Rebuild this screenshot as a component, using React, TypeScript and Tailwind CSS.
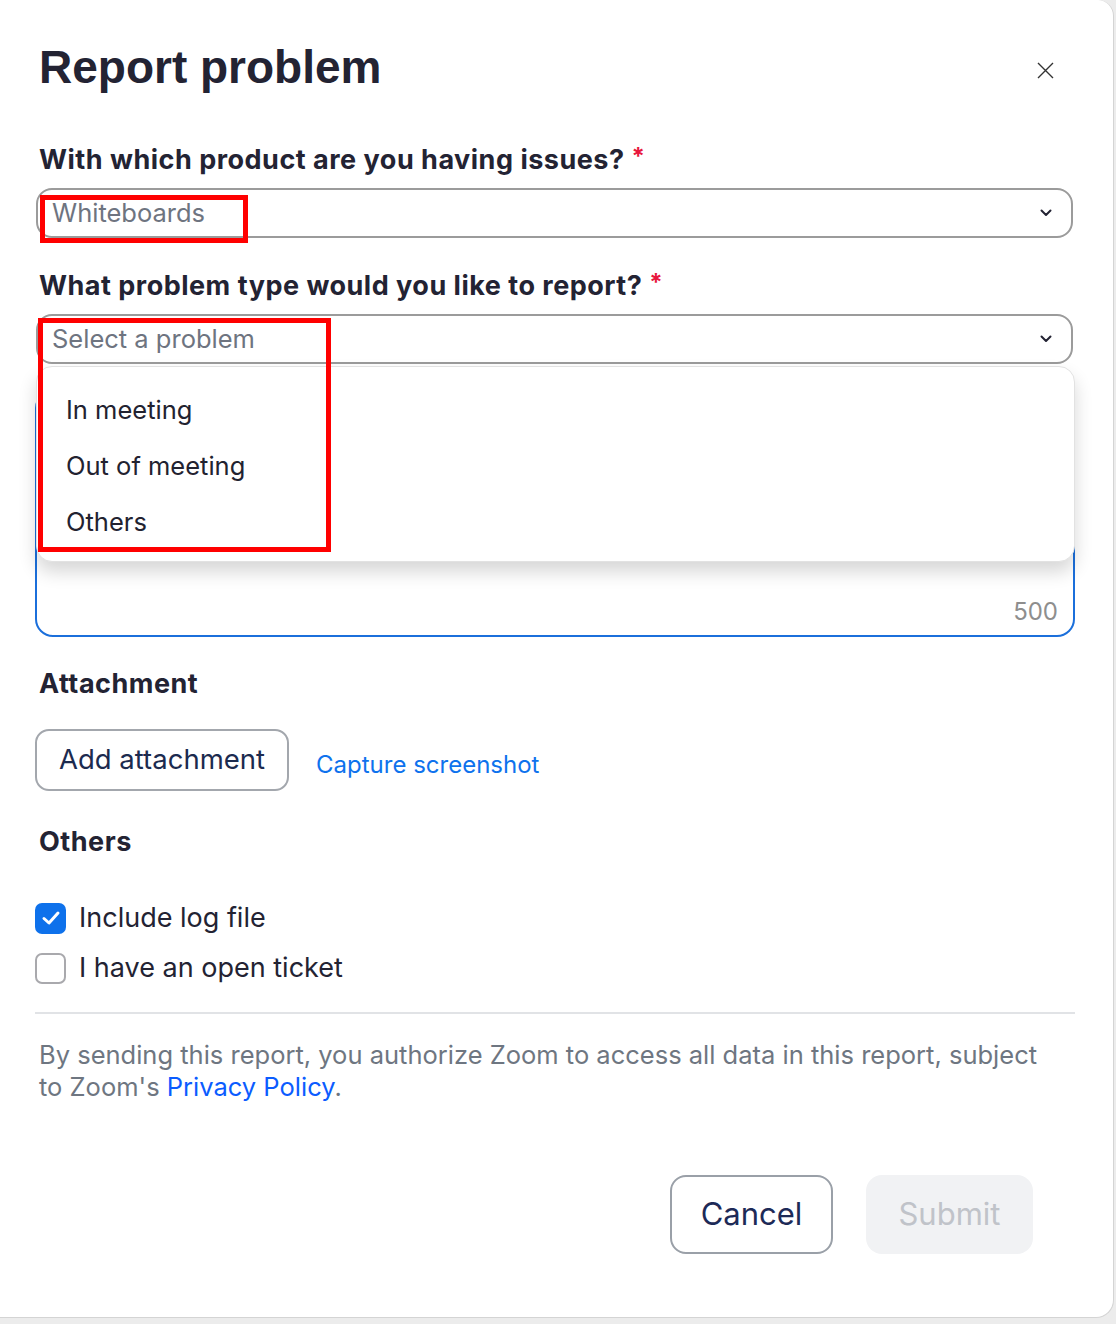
import React from 'react';

const INTER = { fontFamily: 'Inter, "Noto Sans", sans-serif' };
const HELV = { fontFamily: '"Liberation Sans", Arial, sans-serif' };

function Chevron() {
  return (
    <svg width="12" height="8" viewBox="0 0 12 8" fill="none">
      <path d="M1.5 1.5L6 6L10.5 1.5" stroke="#232333" strokeWidth="2" strokeLinecap="round" strokeLinejoin="round" />
    </svg>
  );
}

function Label({ children }: { children: React.ReactNode }) {
  return (
    <div className="ml-[3px] h-[32px] flex items-center text-[27px] font-bold text-[#232333] tracking-[0.5px]" style={INTER}>
      {children}
      <span className="ml-[7px] -mt-[6px] text-[24px] font-bold text-[#e8173d]">*</span>
    </div>
  );
}

function Select({ value }: { value: string }) {
  return (
    <div className="h-[50px] flex items-center justify-between rounded-[16px] border-2 border-[#9b9b9b] bg-white pl-[14px] pr-[19px]">
      <span className="text-[25.5px] text-[#6e7480]" style={INTER}>{value}</span>
      <Chevron />
    </div>
  );
}

export default function App() {
  const items = ['In meeting', 'Out of meeting', 'Others'];

  return (
    <div className="min-h-[1324px] bg-[#ececec]">
      <div className="relative w-[1114px] h-[1318px] bg-white rounded-r-[16px] rounded-br-[18px] border-r border-b border-[#d4d4d4] pl-[36px] pr-[40px]">
        {/* header */}
        <div className="flex items-center justify-between pt-[39px] pr-[19px]">
          <h1 className="ml-[3px] text-[46px] leading-[56px] font-bold text-[#232333]" style={HELV}>
            Report problem
          </h1>
          <svg width="17" height="17" viewBox="0 0 17 17" className="mt-[6px]">
            <path d="M1 1L16 16M16 1L1 16" stroke="#333" strokeWidth="1.4" />
          </svg>
        </div>

        <div className="mt-[49px]">
          <Label>With which product are you having issues?</Label>
          <div className="mt-[12px]">
            <Select value="Whiteboards" />
          </div>
        </div>

        <div className="mt-[32px] relative">
          <Label>What problem type would you like to report?</Label>
          <div className="mt-[12px]">
            <Select value="Select a problem" />
          </div>

          {/* dropdown menu */}
          <div className="absolute left-0 right-[-2px] top-[96px] z-20 h-[196px] bg-white rounded-[16px] border border-[#e2e2e2] shadow-[0_10px_18px_rgba(0,0,0,0.16)] pt-[15px] pl-[29px]" style={INTER}>
            {items.map((it) => (
              <div key={it} className="h-[56px] flex items-center text-[25.5px] text-[#222230]">
                {it}
              </div>
            ))}
          </div>
        </div>

        {/* description textarea (mostly covered by menu) */}
        <div className="mt-[26px] -ml-[1px] w-[1040px] h-[247px] rounded-[18px] border-2 border-[#1b6fdb] flex items-end justify-end pr-[15px] pb-[5px]">
          <span className="text-[24px] text-[#8e8e8e]" style={INTER}>500</span>
        </div>

        <div className="mt-[31px] ml-[3px] h-[32px] flex items-center text-[27px] font-bold text-[#232333] tracking-[0.5px]" style={INTER}>
          Attachment
        </div>
        <div className="mt-[29px] -ml-[1px] flex items-center">
          <button className="w-[254px] h-[62px] rounded-[14px] border-2 border-[#a3a7ad] text-[27.5px] text-[#1c2b4f]" style={INTER}>
            Add attachment
          </button>
          <span className="ml-[27px] mt-[9px] text-[24px] text-[#0e72ed]" style={INTER}>Capture screenshot</span>
        </div>

        <div className="mt-[35px] ml-[3px] h-[32px] flex items-center text-[27px] font-bold text-[#232333] tracking-[0.5px]" style={INTER}>
          Others
        </div>

        <div className="mt-[45px] -ml-[1px] flex flex-col gap-[20px]">
          <div className="flex items-center h-[30px]">
            <span className="w-[31px] h-[31px] rounded-[7px] bg-[#0e71eb] flex items-center justify-center">
              <svg width="20" height="16" viewBox="0 0 20 16" fill="none">
                <path d="M3 8.5L8 13L17 3" stroke="white" strokeWidth="3" strokeLinecap="round" strokeLinejoin="round" />
              </svg>
            </span>
            <span className="ml-[13px] text-[27px] text-[#232333]" style={INTER}>Include log file</span>
          </div>
          <div className="flex items-center h-[30px]">
            <span className="w-[31px] h-[31px] rounded-[7px] border-2 border-[#a9a9ad] bg-white" />
            <span className="ml-[13px] text-[27px] text-[#232333]" style={INTER}>I have an open ticket</span>
          </div>
        </div>

        <div className="mt-[29px] -ml-[1px] w-[1040px] h-[2px] bg-[#e1e3e6]" />

        <p className="mt-[25px] ml-[3px] text-[25.5px] leading-[32px] text-[#6e7681]" style={INTER}>
          By sending this report, you authorize Zoom to access all data in this report, subject
          <br />
          to Zoom's <span className="text-[#0b5cff]">Privacy Policy</span>.
        </p>

        <div className="mt-[72px] flex justify-end gap-[33px] pr-[40px]">
          <button className="w-[163px] h-[79px] rounded-[16px] border-2 border-[#9aa0a8] text-[31px] text-[#1d2a57]" style={INTER}>
            Cancel
          </button>
          <button className="w-[167px] h-[79px] rounded-[16px] bg-[#f1f2f4] text-[31px] text-[#c0c3c9]" style={INTER}>
            Submit
          </button>
        </div>

        {/* annotation boxes */}
        <div className="absolute left-[40px] top-[195px] w-[208px] h-[48px] border-[5px] border-[#ff0000] z-30" />
        <div className="absolute left-[38px] top-[318px] w-[293px] h-[234px] border-[5px] border-[#ff0000] z-30" />
      </div>
    </div>
  );
}
